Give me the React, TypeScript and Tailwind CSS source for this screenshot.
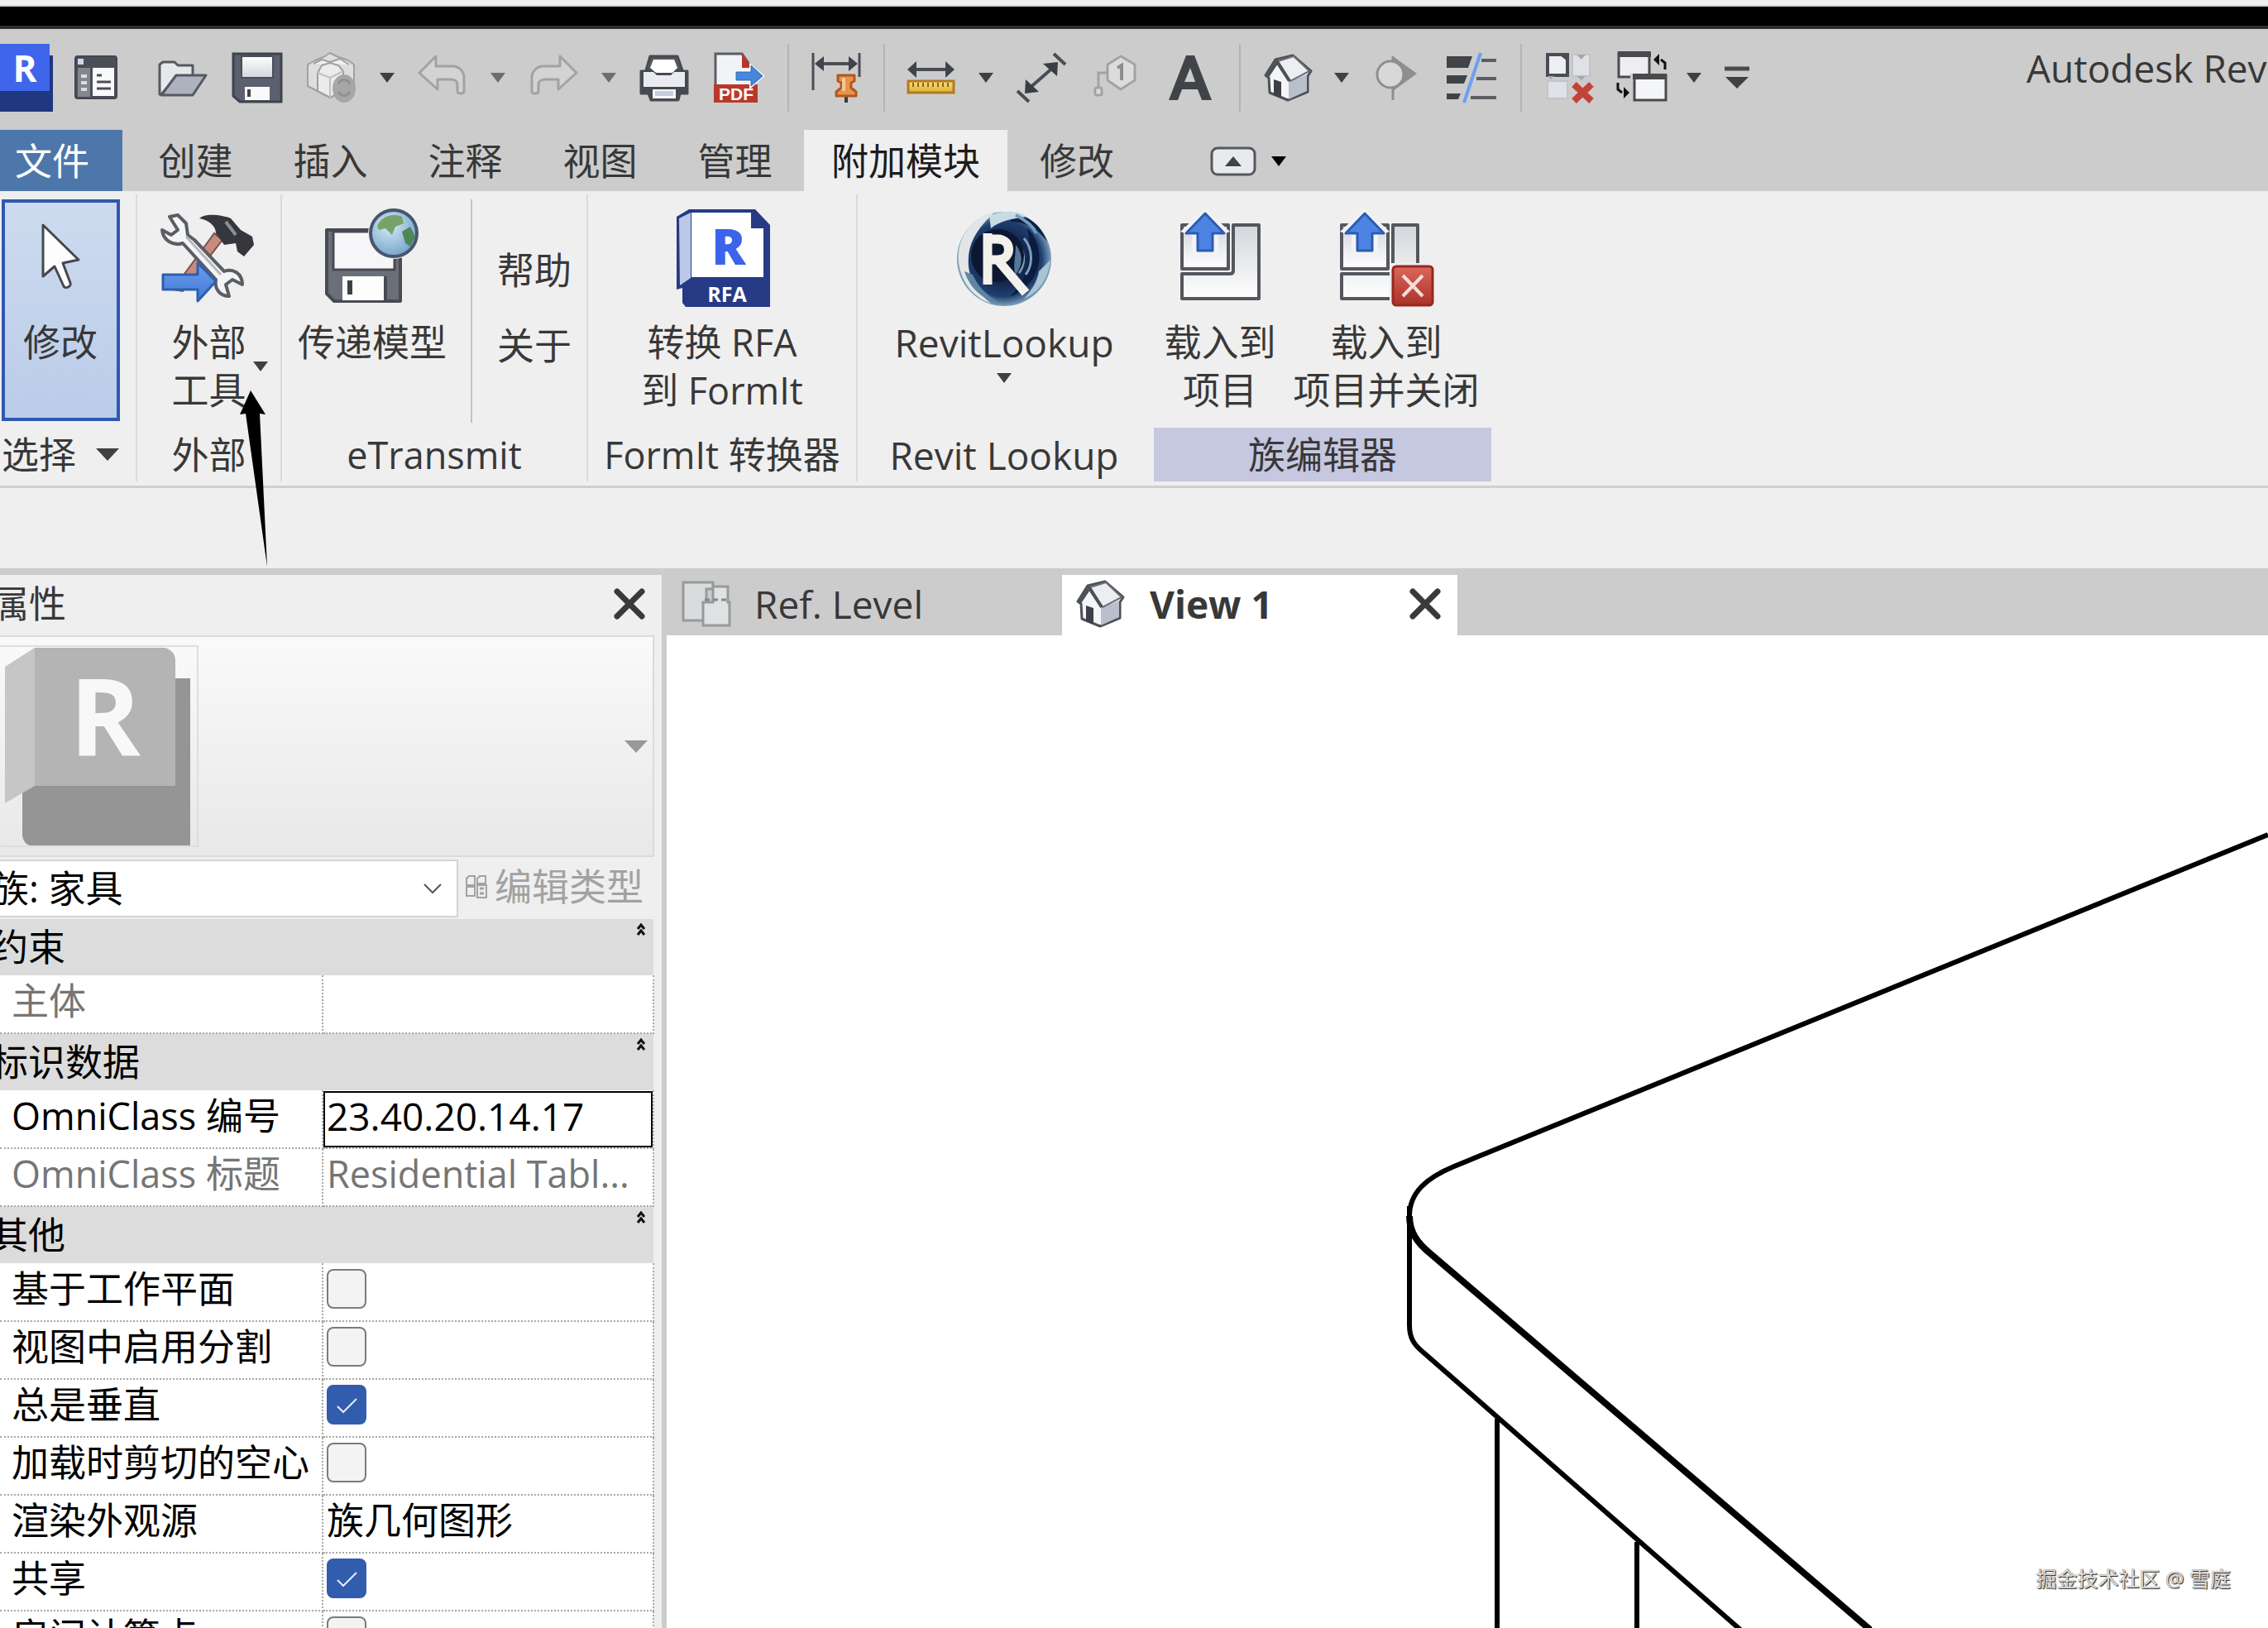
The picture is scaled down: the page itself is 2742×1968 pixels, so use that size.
import React from "react";

type Kids = { children: React.ReactNode };

/* ---------- small building blocks ---------- */

const Icon = ({ children }: Kids) => (
  <svg viewBox="0 0 60 60" className="h-[60px] w-[60px] shrink-0 overflow-visible" aria-hidden="true">
    {children}
  </svg>
);

const BigIcon = ({ children }: Kids) => (
  <svg viewBox="0 0 116 120" className="h-[120px] w-[116px] shrink-0 overflow-visible" aria-hidden="true">
    {children}
  </svg>
);

const Caret = ({ color = "#404040" }: { color?: string }) => (
  <svg viewBox="0 0 18 12" className="h-3 w-[18px] shrink-0" aria-hidden="true">
    <path d="M0 0H18L9 12Z" fill={color} />
  </svg>
);

const Tool = ({ label, children, wide = true }: Kids & { label: string; wide?: boolean }) => (
  <button
    type="button"
    aria-label={label}
    className={`flex h-full shrink-0 items-center justify-center ${wide ? "w-[90px]" : "w-[86px]"}`}
  >
    {children}
  </button>
);

const Drop = ({ label, color }: { label: string; color?: string }) => (
  <button type="button" aria-label={label} className="flex h-full w-11 shrink-0 items-center justify-center">
    <Caret color={color} />
  </button>
);

const Divider = () => (
  <div className="flex h-full w-[30px] shrink-0 items-center justify-center">
    <div className="h-[82px] w-0.5 bg-[#b4b4b4]" />
  </div>
);

const Close = () => (
  <svg viewBox="0 0 38 38" className="h-[38px] w-[38px] shrink-0" aria-hidden="true">
    <path d="M4 4L34 34M34 4L4 34" stroke="#3a3a3a" strokeWidth="7" strokeLinecap="round" />
  </svg>
);

const Defs = () => (
  <svg className="absolute h-0 w-0" aria-hidden="true">
    <defs>
      <linearGradient id="paper" x1="0" y1="0" x2="0" y2="1">
        <stop offset="0" stopColor="#d3d5da" />
        <stop offset="1" stopColor="#ffffff" />
      </linearGradient>
      <linearGradient id="metal" x1="0" y1="0" x2="0" y2="1">
        <stop offset="0" stopColor="#ffffff" />
        <stop offset="1" stopColor="#d2d5db" />
      </linearGradient>
      <linearGradient id="blueArrow" x1="0" y1="0" x2="0" y2="1">
        <stop offset="0" stopColor="#6fa0ee" />
        <stop offset="1" stopColor="#3f77d4" />
      </linearGradient>
      <linearGradient id="redBox" x1="0" y1="0" x2="0" y2="1">
        <stop offset="0" stopColor="#d9685c" />
        <stop offset="1" stopColor="#ab3228" />
      </linearGradient>
      <linearGradient id="goldBar" x1="0" y1="0" x2="0" y2="1">
        <stop offset="0" stopColor="#f7e08a" />
        <stop offset="1" stopColor="#ddb02c" />
      </linearGradient>
      <radialGradient id="globe" cx="0.4" cy="0.35" r="0.75">
        <stop offset="0" stopColor="#d3e9f5" />
        <stop offset="1" stopColor="#6b9cc8" />
      </radialGradient>
      <radialGradient id="swirl" cx="0.5" cy="0.5" r="0.5">
        <stop offset="0" stopColor="#4b6f95" />
        <stop offset="0.5" stopColor="#14264d" />
        <stop offset="0.8" stopColor="#1f3f70" />
        <stop offset="1" stopColor="#7fa3bd" />
      </radialGradient>
    </defs>
  </svg>
);

/* ---------- quick access icons ---------- */

const HouseShape = () => (
  <>
    <path d="M7 30L3 27L15 8L36 3L58 22L54 28V47L30 57L8 48Z" fill="#f4f5f7" stroke="#4d5057" strokeWidth="3" strokeLinejoin="round" />
    <path d="M31 35L53 26V46L31 56Z" fill="#b9bfcb" />
    <path d="M18 10L37 4L56 22L33 34Z" fill="#eceef1" stroke="#6b6e75" strokeWidth="2" />
    <path d="M5 29L17 11L32 34" fill="none" stroke="#4d5057" strokeWidth="4" />
    <path d="M13 51V32L22 35V54Z" fill="#3d4047" />
  </>
);

const HomeListIcon = () => (
  <Icon>
    <rect x="5" y="4" width="50" height="51" rx="3" fill="#4a4e57" stroke="#43464e" strokeWidth="2" />
    <rect x="8" y="7" width="7" height="7" fill="#c8dcf2" />
    <rect x="8" y="18" width="15" height="35" fill="#83868e" />
    <path d="M12 28H19M12 36H19M12 44H19" stroke="#dcdde0" strokeWidth="4" />
    <rect x="26" y="18" width="26" height="34" fill="#fafafa" />
    <path d="M31 27H37M31 35H48M31 43H48" stroke="#4a4e57" strokeWidth="3" />
  </Icon>
);

const FolderIcon = () => (
  <Icon>
    <path d="M2 50V14L6 11H20L24 15H42V28H24L4 50Z" fill="#e6e8ec" stroke="#565960" strokeWidth="3" strokeLinejoin="round" />
    <path d="M4 51L22 27H58L42 51Z" fill="#aeb2bf" stroke="#565960" strokeWidth="3" strokeLinejoin="round" />
  </Icon>
);

const SaveIcon = () => (
  <Icon>
    <path d="M1 1H59V59H9L1 52Z" fill="#5b6070" stroke="#3f434c" strokeWidth="3" />
    <rect x="11" y="4" width="38" height="26" fill="url(#metal)" stroke="#4a4d55" strokeWidth="2" />
    <rect x="15" y="41" width="30" height="16" fill="#fafafa" />
    <rect x="18" y="44" width="4" height="9" fill="#444" />
  </Icon>
);

const SyncIcon = () => (
  <Icon>
    <g fill="#dedede" stroke="#a0a0a0" strokeWidth="2" strokeLinejoin="round">
      <path d="M1 14L10 9L20 5L28 0L38 5L50 9L57 14V42L40 50L24 52L1 40Z" />
      <path d="M8 13L18 8L28 11L40 7L51 14" fill="#f0f0f0" />
      <path d="M13 24L18 15L28 12L38 15L44 22V46L28 54L13 46Z" fill="#ebebeb" />
      <path d="M13 24L28 30L44 22M28 30V54" fill="none" stroke="#c0c0c0" />
    </g>
    <ellipse cx="45" cy="43" rx="14" ry="17" fill="#a6a6a6" />
    <path d="M38 37C42 30 51 32 52 38M52 47C48 54 41 52 38 47" fill="none" stroke="#919191" strokeWidth="3" />
  </Icon>
);

const bentArrow = "M2 24L22 4V16H42C50 16 56 22 56 30V46C56 50 48 50 48 46V38C48 34 44 32 40 32H24V44Z";
const UndoIcon = () => (
  <Icon>
    <path d={bentArrow} fill="#d3d3d3" stroke="#a2a2a2" strokeWidth="3" strokeLinejoin="round" />
  </Icon>
);
const RedoIcon = () => (
  <Icon>
    <path d={bentArrow} transform="matrix(-1 0 0 1 60 0)" fill="#d3d3d3" stroke="#a2a2a2" strokeWidth="3" strokeLinejoin="round" />
  </Icon>
);

const PrintIcon = () => (
  <Icon>
    <path d="M2 22H58V49H49L47 57H14L11 49H2Z" fill="#474a50" stroke="#474a50" strokeWidth="3" strokeLinejoin="round" />
    <path d="M13 4H46L52 21H8Z" fill="#55585e" stroke="#474a50" strokeWidth="3" strokeLinejoin="round" />
    <path d="M17 8H42L46 18L40 24H20L13 18Z" fill="#ffffff" />
    <path d="M5 23H17L21 27H38L42 23H55V41H5Z" fill="#e9ebee" />
    <rect x="16" y="44" width="28" height="11" fill="#f6f7f9" />
    <rect x="19" y="46" width="22" height="6" fill="#c5cede" />
  </Icon>
);

const PdfIcon = () => (
  <Icon>
    <path d="M2 1H34L46 18V58H2Z" fill="#f2f3f5" stroke="#5b5e64" strokeWidth="3" />
    <path d="M34 0L46 18H34Z" fill="#b8352a" />
    <rect x="0" y="38" width="53" height="22" fill="#b8392c" />
    <text x="27" y="57" textAnchor="middle" fontFamily="Liberation Sans" fontWeight="700" fontSize="21" fill="#ffffff">PDF</text>
    <path d="M27 22H44V14L60 28L44 42V34H27Z" fill="#4686dc" stroke="#ffffff" strokeWidth="2" />
    <path d="M27 23H45V15L59 28L45 40V33H27Z" fill="#4686dc" stroke="#2f66b6" strokeWidth="1" />
  </Icon>
);

const AlignedDimIcon = () => (
  <Icon>
    <path d="M2 0V45M58 0V29" stroke="#4a4d55" strokeWidth="3" />
    <path d="M8 13H52" stroke="#4a4d55" strokeWidth="4" />
    <path d="M4 13L15 4V22ZM56 13L45 4V22Z" fill="#3f434c" />
    <path d="M42 50V60" stroke="#3a3a3a" strokeWidth="4" />
    <path d="M32 27H52V34L48 36V42L54 47V52H30V47L36 42V36L32 34Z" fill="#e8934a" stroke="#b3561f" strokeWidth="3" strokeLinejoin="round" />
    <path d="M39 30V46" stroke="#f8c795" strokeWidth="4" />
  </Icon>
);

const MeasureIcon = () => (
  <Icon>
    <path d="M6 20H52" stroke="#4a4d55" strokeWidth="4" />
    <path d="M0 20L11 10V30ZM57 20L46 10V30Z" fill="#3f434c" />
    <rect x="1" y="34" width="55" height="14" fill="url(#goldBar)" stroke="#b27a20" strokeWidth="3" />
    <path d="M7 36V41M13 36V41M19 36V41M25 36V41M31 36V41M37 36V41M43 36V41M49 36V41" stroke="#8a661a" strokeWidth="2" />
  </Icon>
);

const LinearDimIcon = () => (
  <Icon>
    <path d="M45 1L59 14M1 46L15 59" stroke="#4a4d55" strokeWidth="4" />
    <path d="M14 44L46 16" stroke="#4a4d55" strokeWidth="4" />
    <path d="M50 11L49 28L32 13ZM10 49L27 47L11 32Z" fill="#3a3d46" />
  </Icon>
);

const TagIcon = () => (
  <Icon>
    <path d="M20 14L36 4L53 14V33L36 44L20 33Z" fill="#dcdcdc" stroke="#a3a3a3" strokeWidth="3" strokeLinejoin="round" />
    <path d="M32 18L37 15V33" fill="none" stroke="#8e8e8e" strokeWidth="4" />
    <path d="M20 24H9V42" fill="none" stroke="#a3a3a3" strokeWidth="3" />
    <rect x="5" y="42" width="8" height="9" rx="2" fill="#dcdcdc" stroke="#a3a3a3" strokeWidth="3" />
  </Icon>
);

const TextIcon = () => (
  <Icon>
    <path fillRule="evenodd" d="M4 57L25 3H35L56 57H44L39 44H20L15 57ZM23 35H36L30 18Z" fill="#404347" />
  </Icon>
);

const SectionIcon = () => (
  <Icon>
    <path d="M25 4L54 25L25 46Z" fill="#8e8e8e" />
    <path d="M25 4V57" stroke="#8e8e8e" strokeWidth="3" />
    <circle cx="22" cy="26" r="16" fill="#d8d8d8" stroke="#8e8e8e" strokeWidth="3" />
  </Icon>
);

const ThinLinesIcon = () => (
  <Icon>
    <path d="M0 4H31L26 18H0ZM0 27H25L21 37H0ZM0 49H17L14 56H0Z" fill="#404347" />
    <path d="M42 9H60M36 31H60M29 54H60" stroke="#5b5e63" strokeWidth="4" />
    <path d="M41 0L21 60" stroke="#6c9ff0" strokeWidth="4" />
  </Icon>
);

const CloseHiddenIcon = () => (
  <Icon>
    <rect x="4" y="2" width="24" height="25" fill="#eceef1" stroke="#4a4d55" strokeWidth="4" />
    <path d="M18 2H28V10Z" fill="#4a4d55" />
    <path d="M34 2H55V28H34ZM4 34H28V55H4Z" fill="#dfe1e6" stroke="#c3c4c9" strokeWidth="2" />
    <path d="M39 2H50L45 8ZM4 28H12L8 32ZM39 28H50L45 33Z" fill="#a7a9b0" />
    <path d="M36 38L57 58M57 38L36 58" stroke="#c24437" strokeWidth="8" />
  </Icon>
);

const WindowsIcon = () => (
  <Icon>
    <rect x="4" y="0" width="37" height="29" fill="#edeef1" stroke="#4a4a4c" strokeWidth="3" />
    <rect x="3" y="-2" width="40" height="7" fill="#4a4a4c" />
    <rect x="18" y="25" width="44" height="35" fill="#cccccc" />
    <rect x="23" y="27" width="38" height="30" fill="#f4f5f7" stroke="#4a4a4c" strokeWidth="3" />
    <rect x="21" y="25" width="41" height="7" fill="#4a4a4c" />
    <path d="M60 20V12L55 8" fill="none" stroke="#111" strokeWidth="3" />
    <path d="M46 8L53 1V15ZM17 48L10 41V55Z" fill="#111" />
    <path d="M3 36V44L8 48" fill="none" stroke="#111" strokeWidth="3" />
  </Icon>
);

/* ---------- ribbon icons ---------- */

const CursorIcon = () => (
  <BigIcon>
    <path d="M37 20V82L51 70L62 94C64 98 72 94 70 90L61 66L80 62Z" fill="#fdfdfd" stroke="#45484f" strokeWidth="3" strokeLinejoin="round" />
  </BigIcon>
);

const ToolsIcon = () => (
  <BigIcon>
    <path d="M14 98L64 30L74 38L26 100Z" fill="#c98a80" stroke="#77504c" strokeWidth="2" />
    <path d="M46 12C54 5 74 8 84 12L96 26L110 34L112 44L100 58L92 52L90 42L76 44L66 30C66 20 56 14 46 12Z" fill="#35373d" />
    <path d="M78 16L90 32" stroke="#8b8e96" strokeWidth="4" />
    <path d="M10 10L20 8L30 18L32 32L40 38L76 76C86 72 98 78 98 92L86 86L78 92L82 106C70 106 64 96 66 86L26 42C14 46 2 38 1 26L12 32L20 26Z" fill="#f4f5f7" stroke="#5a5d64" strokeWidth="4" strokeLinejoin="round" />
    <path d="M30 34L72 80" stroke="#b5b8be" strokeWidth="3" />
    <path d="M2 80H44V66L66 88L44 112V98H2Z" fill="url(#blueArrow)" stroke="#2f5fae" strokeWidth="3" strokeLinejoin="round" />
  </BigIcon>
);

const TransmitIcon = () => (
  <BigIcon>
    <path d="M3 26H92V112H12L3 103Z" fill="#6b6f7a" stroke="#484b52" strokeWidth="4" strokeLinejoin="round" />
    <rect x="11" y="28" width="74" height="46" fill="#f6f6f8" stroke="#484b52" strokeWidth="3" />
    <rect x="22" y="82" width="50" height="29" fill="#fdfdfd" />
    <rect x="28" y="87" width="6" height="17" fill="#3d4046" />
    <path d="M74 82V110" stroke="#484b52" strokeWidth="4" />
    <circle cx="84" cy="30" r="31" fill="#efefef" />
    <circle cx="84" cy="30" r="28" fill="url(#globe)" stroke="#46566d" strokeWidth="4" />
    <path d="M64 22C68 10 82 5 94 10L96 18L86 22L82 32L74 24L66 26Z" fill="#76a468" />
    <path d="M94 28L104 22L110 34L104 46L98 42Z" fill="#4f8657" />
  </BigIcon>
);

const RfaIcon = () => (
  <BigIcon>
    <path d="M3 10L18 1H98L116 20V119H14L10 114V96L3 98Z" fill="#263a86" />
    <path d="M6 12L20 5V84L7 93Z" fill="#bcc8e8" />
    <path d="M21 5H93V24H108V83H21Z" fill="#ffffff" />
    <text x="66" y="68" textAnchor="middle" fontFamily="Open Sans" fontWeight="800" fontSize="61" fill="#3c63ea">R</text>
    <text x="64" y="113" textAnchor="middle" fontFamily="Open Sans" fontWeight="700" fontSize="25" fill="#ffffff">RFA</text>
  </BigIcon>
);

const LookupIcon = () => (
  <BigIcon>
    <circle cx="58" cy="61" r="57" fill="url(#swirl)" />
    <path d="M46 5C16 12 0 38 3 66C6 90 22 108 42 115C22 98 13 80 15 58C17 36 30 20 46 5Z" fill="#e3e6e6" />
    <path d="M10 76C16 94 26 104 42 112L52 114C36 104 26 94 20 80Z" fill="#5d86a5" />
    <path d="M62 5C84 6 102 18 110 40C98 24 84 16 66 16Z" fill="#0f1e47" />
    <path d="M40 9C54 2 74 2 86 10C70 12 54 14 42 24Z" fill="#c8dae2" />
    <path d="M72 8C84 14 92 20 97 30" fill="none" stroke="#6f9dbd" strokeWidth="4" />
    <path d="M86 24C102 40 106 66 92 86C84 96 76 102 66 106C84 88 94 60 86 24Z" fill="#0c1b40" />
    <path d="M114 62C112 84 100 102 82 109C92 98 98 88 100 76Z" fill="#a9c4d2" />
    <path d="M72 40C84 50 84 66 76 78M82 36C94 50 92 70 84 80" fill="none" stroke="#7e9fb8" strokeWidth="3" />
    <circle cx="50" cy="57" r="32" fill="#0e1732" />
    <path d="M72 44C82 56 80 70 72 80C68 72 72 58 72 44Z" fill="#54789a" />
    <path d="M38 30V92M38 37H50C68 37 68 62 50 62H42M50 62L84 102" fill="none" stroke="#f3f1ec" strokeWidth="11" />
  </BigIcon>
);

const LoadShape = () => (
  <>
    <path d="M8 19H64V72H8Z" fill="url(#paper)" stroke="#54575d" strokeWidth="4" strokeLinejoin="round" />
    <path d="M36 -1L66 27L52 32V56H20V32L6 27Z" fill="#f2f3f5" />
    <path d="M36 5L59 29H45V50H27V29H13Z" fill="#4d84e4" stroke="#2c5cb4" strokeWidth="3" strokeLinejoin="round" />
  </>
);

const LoadIcon = () => (
  <BigIcon>
    <g transform="translate(4 1)">
      <path d="M70 19H101V108H8V78H66Q70 78 70 74Z" fill="url(#paper)" stroke="#54575d" strokeWidth="4" strokeLinejoin="round" />
      <LoadShape />
    </g>
  </BigIcon>
);

const LoadCloseIcon = () => (
  <BigIcon>
    <path d="M66 20H96V109H4V79H62Q66 79 66 75Z" fill="url(#paper)" stroke="#54575d" strokeWidth="4" strokeLinejoin="round" />
    <g transform="translate(-4 1)">
      <LoadShape />
    </g>
    <rect x="62" y="66" width="54" height="52" fill="#efefef" />
    <rect x="66" y="70" width="48" height="47" rx="4" fill="url(#redBox)" stroke="#98281f" strokeWidth="3" />
    <path d="M78 81L102 106M102 81L78 106" stroke="#f6dcd8" strokeWidth="4" />
  </BigIcon>
);

/* ---------- ribbon ---------- */

const RibbonPanel = ({
  title,
  className,
  titleClass = "",
  border = true,
  children,
}: Kids & { title: React.ReactNode; className: string; titleClass?: string; border?: boolean }) => (
  <section className={`flex shrink-0 flex-col ${border ? "border-r-2 border-[#dadada]" : ""} ${className}`}>
    <div className="flex h-[282px] justify-center pt-[6px]">{children}</div>
    <h2 className={`flex h-[65px] items-center justify-center whitespace-nowrap ${titleClass}`}>{title}</h2>
  </section>
);

const BigButton = ({
  icon,
  lines,
  className = "pt-[11px]",
  side,
}: {
  icon: React.ReactNode;
  lines: string[];
  className?: string;
  side?: React.ReactNode;
}) => (
  <button type="button" className={`flex h-[268px] shrink-0 flex-col items-center ${className}`}>
    {icon}
    <span className="mt-[13px] grid grid-cols-[1fr_auto_1fr] items-center leading-[58px] whitespace-nowrap">
      <span />
      <span>
        {lines.map((l) => (
          <span key={l} className="block">
            {l}
          </span>
        ))}
      </span>
      <span className="w-0">{side}</span>
    </span>
  </button>
);

const tabsBefore = ["创建", "插入", "注释", "视图", "管理"];

/* ---------- properties ---------- */

type Row = { label: string; kind: "text" | "edit" | "check"; value?: string; on?: boolean; disabled?: boolean };
const groups: { name: string; rows: Row[] }[] = [
  { name: "约束", rows: [{ label: "主体", kind: "text", value: "", disabled: true }] },
  {
    name: "标识数据",
    rows: [
      { label: "OmniClass 编号", kind: "edit", value: "23.40.20.14.17" },
      { label: "OmniClass 标题", kind: "text", value: "Residential Tabl...", disabled: true },
    ],
  },
  {
    name: "其他",
    rows: [
      { label: "基于工作平面", kind: "check" },
      { label: "视图中启用分割", kind: "check" },
      { label: "总是垂直", kind: "check", on: true },
      { label: "加载时剪切的空心", kind: "check" },
      { label: "渲染外观源", kind: "text", value: "族几何图形" },
      { label: "共享", kind: "check", on: true },
      { label: "房间计算点", kind: "check" },
    ],
  },
];

const Check = ({ id, on }: { id: string; on?: boolean }) => (
  <span className="mb-2 grid w-12">
    <input
      id={id}
      type="checkbox"
      defaultChecked={on}
      className="peer col-start-1 row-start-1 h-12 w-12 appearance-none rounded-lg border-2 border-[#7b7b7b] bg-[#f3f3f3] checked:border-[#325cae] checked:bg-[#325cae]"
    />
    <svg viewBox="0 0 48 48" className="pointer-events-none invisible col-start-1 row-start-1 h-12 w-12 peer-checked:visible" aria-hidden="true">
      <path d="M13 26L20 33L36 17" fill="none" stroke="#e6edf8" strokeWidth="2" />
    </svg>
  </span>
);

const PropertyValue = ({ row }: { row: Row }) => {
  if (row.kind === "check") return <Check id={row.label} on={row.on} />;
  if (row.kind === "edit")
    return (
      <input
        id={row.label}
        defaultValue={row.value}
        className="block h-[68px] w-full border-2 border-black bg-white pb-2 pl-0.5 text-[46px] text-black outline-none"
      />
    );
  return <span className="block pb-2">{row.value}</span>;
};

const PropertyTable = () => (
  <table className="w-[791px] table-fixed border-collapse">
    <colgroup>
      <col className="w-[390px]" />
      <col />
    </colgroup>
    {groups.map((g) => (
      <tbody key={g.name}>
        <tr className="h-[68px] bg-[#dcdcdc]">
          <th colSpan={2} scope="colgroup" className="p-0 text-left font-normal text-black">
            <span className="-ml-[11px] flex h-[68px] items-center justify-between pr-[9px]">
              {g.name}
              <button type="button" aria-label={`折叠${g.name}`} className="flex h-full items-start pt-[5px]">
                <svg viewBox="0 0 12 16" className="h-4 w-3" aria-hidden="true">
                  <path d="M2 7L6 2L10 7M2 14L6 9L10 14" fill="none" stroke="#111" strokeWidth="3" />
                </svg>
              </button>
            </span>
          </th>
        </tr>
        {g.rows.map((r) => (
          <tr key={r.label} className={`h-[70px] bg-white ${r.disabled ? "text-[#757575]" : "text-black"}`}>
            <th scope="row" className="border-r-2 border-b-2 border-dotted border-[#a8a8a8] p-0 pb-2 pl-[14px] text-left font-normal whitespace-nowrap">
              {r.kind === "text" ? r.label : <label htmlFor={r.label}>{r.label}</label>}
            </th>
            <td className={`border-r-2 border-b-2 border-dotted border-[#a8a8a8] p-0 whitespace-nowrap ${r.kind === "edit" ? "" : "pl-[4px]"}`}>
              <PropertyValue row={r} />
            </td>
          </tr>
        ))}
      </tbody>
    ))}
  </table>
);

/* ---------- page ---------- */

export default function App() {
  return (
    <div className="flex h-screen flex-col overflow-hidden bg-[#efefef] font-['Open_Sans','Noto_Sans_CJK_SC',sans-serif] text-[45px] leading-[58px] text-[#383838]">
      <Defs />
      <div className="h-2 shrink-0 border-b-2 border-[#d2d2d2]" />
      <div className="h-[27px] shrink-0 border-b-4 border-[#2c2c2c] bg-black" />

      <header className="flex shrink-0 flex-col bg-[#cccccc]">
        <div className="flex h-[122px] items-center pb-1">
          <button type="button" aria-label="Revit" className="h-full w-16 shrink-0">
            <svg viewBox="0 0 64 82" className="h-[82px] w-16" aria-hidden="true">
              <path d="M0 14H64V82H0Z" fill="#20367f" />
              <path d="M0 0H60V57H0Z" fill="#3f66ea" />
              <text x="30" y="46" textAnchor="middle" fontFamily="Open Sans" fontWeight="700" fontSize="44" fill="#ffffff">R</text>
            </svg>
          </button>
          <button type="button" aria-label="主视图" className="mr-2 flex h-full w-[104px] shrink-0 items-center justify-center">
            <HomeListIcon />
          </button>
          <Tool label="打开"><FolderIcon /></Tool>
          <Tool label="保存"><SaveIcon /></Tool>
          <Tool label="同步"><SyncIcon /></Tool>
          <Drop label="同步选项" />
          <Tool label="放弃"><UndoIcon /></Tool>
          <Drop label="放弃列表" color="#6e6e6e" />
          <Tool label="重做"><RedoIcon /></Tool>
          <Drop label="重做列表" color="#6e6e6e" />
          <Tool label="打印"><PrintIcon /></Tool>
          <Tool label="导出 PDF"><PdfIcon /></Tool>
          <Divider />
          <Tool label="对齐约束" wide={false}><AlignedDimIcon /></Tool>
          <Divider />
          <Tool label="测量" wide={false}><MeasureIcon /></Tool>
          <Drop label="测量选项" />
          <Tool label="对齐尺寸标注"><LinearDimIcon /></Tool>
          <Tool label="按类别标记"><TagIcon /></Tool>
          <Tool label="文字"><TextIcon /></Tool>
          <Divider />
          <Tool label="默认三维视图" wide={false}><Icon><HouseShape /></Icon></Tool>
          <Drop label="三维视图选项" />
          <Tool label="剖面"><SectionIcon /></Tool>
          <Tool label="细线"><ThinLinesIcon /></Tool>
          <Divider />
          <Tool label="关闭非活动视图" wide={false}><CloseHiddenIcon /></Tool>
          <Tool label="切换窗口" wide={false}><WindowsIcon /></Tool>
          <Drop label="窗口列表" />
          <button type="button" aria-label="自定义快速访问工具栏" className="flex h-full w-[60px] shrink-0 items-center justify-center">
            <svg viewBox="0 0 30 28" className="h-7 w-[30px]" aria-hidden="true">
              <path d="M0 3H30" stroke="#4a4a4a" strokeWidth="5" />
              <path d="M1 13H29L15 27Z" fill="#404040" />
            </svg>
          </button>
          <h1 className="ml-auto w-[292px] shrink-0 self-start pt-[18px] text-[46px] whitespace-nowrap">Autodesk Rev</h1>
        </div>

        <nav className="flex h-[74px] items-stretch">
          <button type="button" className="mr-[7px] w-[148px] shrink-0 bg-[#4d77ab] pt-0.5 pl-[18px] text-left text-white">文件</button>
          {tabsBefore.map((t) => (
            <button key={t} type="button" className="w-[163px] shrink-0 pt-0.5">{t}</button>
          ))}
          <button type="button" className="ml-0.5 w-[246px] shrink-0 bg-[#efefef] pt-0.5 text-[#1c1c1c]">附加模块</button>
          <button type="button" className="w-[168px] shrink-0 pt-0.5">修改</button>
          <button type="button" aria-label="最小化功能区" className="ml-[77px] flex shrink-0 items-center gap-[18px] pt-0.5">
            <svg viewBox="0 0 56 36" className="h-9 w-14" aria-hidden="true">
              <rect x="2" y="2" width="52" height="32" rx="7" fill="#e9eaee" stroke="#55585c" strokeWidth="3" />
              <path d="M18 24L28 12L38 24Z" fill="#404347" />
            </svg>
            <Caret color="#000000" />
          </button>
        </nav>
      </header>

      <div className="relative flex shrink-0 border-b-3 border-[#cfcfcf] pt-1 pb-[5px]">
        <RibbonPanel
          className="w-[166px]"
          titleClass="justify-start gap-6 pl-[2px]"
          title={
            <>
              选择
              <svg viewBox="0 0 28 15" className="h-[15px] w-7" aria-hidden="true">
                <path d="M0 0H28L14 15Z" fill="#404040" />
              </svg>
            </>
          }
        >
          <BigButton
            icon={<CursorIcon />}
            lines={["修改"]}
            className="mr-[18px] w-[143px] border-4 border-[#3058b0] bg-linear-to-b from-[#cddbef] to-[#bbcce9] pt-[7px]"
          />
        </RibbonPanel>
        <RibbonPanel className="w-[175px]" title="外部">
          <BigButton
            icon={<ToolsIcon />}
            lines={["外部", "工具"]}
            side={
              <span className="block pl-2">
                <Caret />
              </span>
            }
          />
        </RibbonPanel>
        <RibbonPanel className="w-[370px]" title="eTransmit">
          <BigButton icon={<TransmitIcon />} lines={["传递模型"]} className="w-[228px] pt-[11px] pr-2.5" />
          <div className="h-[270px] w-0.5 shrink-0 bg-[#c4c4c4]" />
          <div className="flex flex-1 flex-col pt-[40px] pl-[30px]">
            <button type="button" className="h-[91px] text-left">帮助</button>
            <button type="button" className="h-[91px] text-left">关于</button>
          </div>
        </RibbonPanel>
        <RibbonPanel className="w-[326px]" title="FormIt 转换器">
          <BigButton icon={<RfaIcon />} lines={["转换 RFA", "到 FormIt"]} />
        </RibbonPanel>
        <RibbonPanel className="w-[358px] pr-1" title="Revit Lookup" titleClass="text-[46px]" border={false}>
          <button type="button" className="flex h-[268px] flex-col items-center pt-[11px]">
            <LookupIcon />
            <span className="mt-[13px] mb-2 text-[46px]">RevitLookup</span>
            <Caret />
          </button>
        </RibbonPanel>
        <RibbonPanel className="w-[408px]" title="族编辑器" titleClass="bg-[#c6c7e0]" border={false}>
          <BigButton icon={<LoadIcon />} lines={["载入到", "项目"]} className="w-[160px] pt-[11px]" />
          <BigButton icon={<LoadCloseIcon />} lines={["载入到", "项目并关闭"]} className="mr-[6px] w-[242px] pt-[11px]" />
        </RibbonPanel>
        <svg viewBox="0 0 36 216" className="pointer-events-none absolute top-[239px] left-[288px] h-[216px] w-9" aria-hidden="true">
          <path d="M15 2L33 31L26 30L35 215L9 30L2 31Z" fill="#000000" />
        </svg>
      </div>

      <div className="h-[97px] shrink-0" />

      <main className="flex min-h-0 flex-1 border-t-8 border-[#cccccc]">
        <aside className="w-[806px] shrink-0 overflow-hidden border-r-6 border-[#cccccc]">
          <div className="flex h-[73px] items-center justify-between pr-5 pb-1">
            <h2 className="-ml-2.5">属性</h2>
            <button type="button" aria-label="关闭属性"><Close /></button>
          </div>
          <div className="flex h-[268px] w-[791px] items-center justify-between border-2 border-l-0 border-[#dadada] bg-linear-to-b from-[#fafafa] to-[#e8e8e8] pr-1.5">
            <div className="h-[244px] w-[240px] border-2 border-l-0 border-[#dedede]">
              <svg viewBox="0 0 238 240" className="h-[240px] w-[238px]" aria-hidden="true">
                <path d="M212 38H230V240H38C31 240 27 233 27 226V168H212Z" fill="#959595" />
                <path d="M42 1L6 24V189L42 168Z" fill="#c6c6c6" />
                <path d="M42 1H200C208 4 212 9 212 17V168H42Z" fill="#b4b4b4" />
                <text x="127" y="131" textAnchor="middle" fontFamily="Open Sans" fontWeight="700" fontSize="130" fill="#f8f8f8">R</text>
              </svg>
            </div>
            <button type="button" aria-label="类型选择器">
              <svg viewBox="0 0 28 15" className="h-[15px] w-7" aria-hidden="true">
                <path d="M0 0H28L14 15Z" fill="#999999" />
              </svg>
            </button>
          </div>
          <div className="flex h-[75px] items-center">
            <div className="grid h-[70px] w-[554px] items-center border-2 border-l-0 border-[#d4d4d4] bg-white">
              <select aria-label="族" className="col-start-1 row-start-1 -ml-2.5 appearance-none bg-transparent text-black outline-none">
                <option>族: 家具</option>
              </select>
              <svg viewBox="0 0 24 14" className="pointer-events-none col-start-1 row-start-1 mr-[17px] h-3.5 w-6 justify-self-end" aria-hidden="true">
                <path d="M2 2L12 12L22 2" fill="none" stroke="#555" strokeWidth="2" />
              </svg>
            </div>
            <button type="button" className="ml-2 flex items-center gap-2 pb-1 text-[#a2a2a2]">
              <svg viewBox="0 0 28 28" className="h-7 w-7" aria-hidden="true">
                <path d="M2 4L5 1H12V12H2ZM15 4L18 1H25V10H15ZM2 14H12V25H2ZM15 12H26V27H15Z" fill="none" stroke="#a2a2a2" strokeWidth="2" />
                <path d="M18 16H23M18 22H23" stroke="#a2a2a2" strokeWidth="3" />
              </svg>
              编辑类型
            </button>
          </div>
          <PropertyTable />
        </aside>

        <section className="flex min-w-0 flex-1 flex-col">
          <div className="flex h-[73px] shrink-0 bg-[#cccccc]">
            <button type="button" className="flex w-[478px] shrink-0 items-center gap-[28px] pb-1 pl-[18px] text-[46px]">
              <Icon>
                <path d="M2 4H38V12H30V50H2Z" fill="#d9dcdd" stroke="#979a9b" strokeWidth="3" />
                <path d="M38 9H56V28H58V56H26V28H38Z" fill="#dfe2e3" stroke="#979a9b" strokeWidth="3" />
                <path d="M28 25H54" stroke="#85888a" strokeWidth="3" strokeDasharray="6 4" />
              </Icon>
              Ref. Level
            </button>
            <div className="flex w-[478px] shrink-0 items-center bg-white pr-[20px] pb-1 pl-[16px]">
              <button type="button" className="flex flex-1 items-center gap-[30px] text-[46px] font-bold">
                <Icon><HouseShape /></Icon>
                View 1
              </button>
              <button type="button" aria-label="关闭 View 1"><Close /></button>
            </div>
          </div>
          <div className="relative min-h-0 flex-1 bg-white">
            <svg viewBox="0 0 1936 1200" preserveAspectRatio="xMinYMin slice" className="h-full w-full" role="img" aria-label="三维视图">
              <g fill="none" stroke="#000000" strokeWidth="6" strokeLinejoin="round">
                <path d="M1936 241L952 642C918 656 898 674 898 702" />
                <path d="M898 702C898 722 908 735 924 748L1455 1202" strokeWidth="8" />
                <path d="M898 690V834C898 850 904 858 915 867L1298 1202" />
                <path d="M1004 947V1202M1173 1096V1202" />
              </g>
            </svg>
            <p className="absolute right-[45px] bottom-[42px] text-[25px] leading-9 whitespace-nowrap text-[#dedede] [text-shadow:1px_1px_1px_#1a1a1a,0px_0px_1px_#555555]">掘金技术社区 @ 雪庭</p>
          </div>
        </section>
      </main>
    </div>
  );
}
